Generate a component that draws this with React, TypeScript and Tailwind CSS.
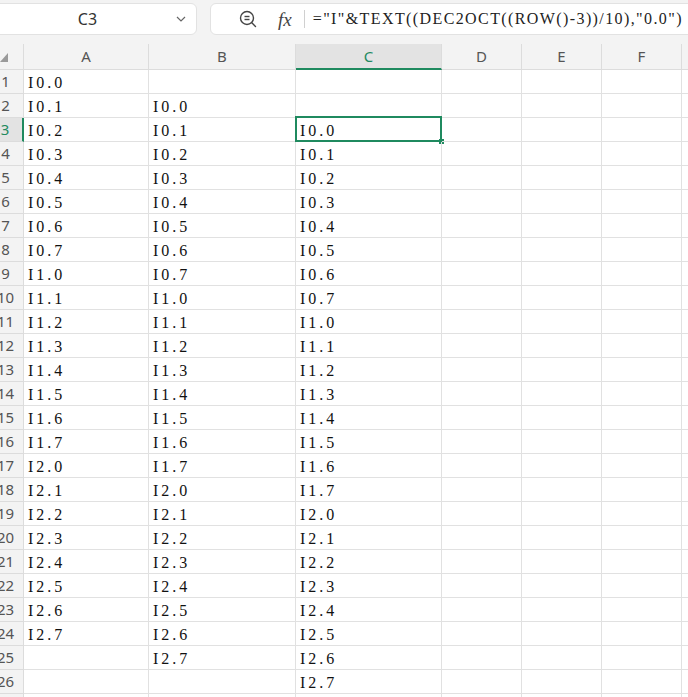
import React from "react";

const COLS = [
  { key: "A", w: 125 },
  { key: "B", w: 147 },
  { key: "C", w: 146 },
  { key: "D", w: 80 },
  { key: "E", w: 80 },
  { key: "F", w: 80 },
  { key: "G", w: 80 },
];

const seq: string[] = [];
for (let i = 0; i < 3; i++) for (let j = 0; j < 8; j++) seq.push(`I${i}.${j}`);

function cellValue(row: number, col: string): string {
  const offset = col === "A" ? 1 : col === "B" ? 2 : col === "C" ? 3 : -1;
  if (offset < 0) return "";
  const idx = row - offset;
  return idx >= 0 && idx < seq.length ? seq[idx] : "";
}

function ZoomIcon() {
  return (
    <svg width="20" height="20" viewBox="0 0 20 20" fill="none" stroke="#444" strokeWidth="1.4">
      <circle cx="9" cy="9" r="6.5" />
      <line x1="13.8" y1="13.8" x2="17.5" y2="17.5" strokeLinecap="round" />
      <line x1="6.5" y1="7.5" x2="11.5" y2="7.5" />
      <line x1="6.5" y1="10.5" x2="11.5" y2="10.5" />
    </svg>
  );
}

function Chevron() {
  return (
    <svg width="14" height="14" viewBox="0 0 14 14" fill="none" stroke="#666" strokeWidth="1.2">
      <polyline points="3,5 7,9 11,5" />
    </svg>
  );
}

export default function App() {
  const rows = Array.from({ length: 28 }, (_, i) => i + 1);
  return (
    <div className="w-[688px] h-[697px] overflow-hidden bg-white">
      {/* toolbar */}
      <div className="h-[44px] bg-[#f3f3f3] flex items-start pt-[3px] gap-[13px] -ml-[10px]">
        <div className="w-[207px] h-[32px] shrink-0 bg-white rounded-[6px] border border-[#e2e2e2] flex items-center pl-[10px] pr-[8px]">
          <div className="flex-1 text-center text-[16px] text-[#333] font-['Noto_Sans',sans-serif] leading-none">C3</div>
          <Chevron />
        </div>
        <div className="w-[500px] h-[32px] shrink-0 bg-white rounded-l-[6px] border border-[#e2e2e2] flex items-center pl-[27px]">
          <ZoomIcon />
          <span className="ml-[20px] text-[19px] italic text-[#444] font-['Liberation_Serif',serif] leading-none">fx</span>
          <div className="ml-[12px] w-px h-[18px] bg-[#d0d0d0]" />
          <span className="ml-[8px] text-[16px] text-[#222] font-['Liberation_Serif',serif] tracking-[1.4px] whitespace-nowrap leading-none">
            ="I"&amp;TEXT((DEC2OCT((ROW()-3))/10),"0.0")
          </span>
        </div>
      </div>

      {/* grid */}
      <div className="-ml-[12px] flex flex-col">
        {/* column header */}
        <div className="flex h-[26px] bg-[#f3f3f3]">
          <div className="w-[36px] shrink-0 relative border-r border-b border-[#dcdcdc]">
            <svg className="absolute left-[12px] top-[9px]" width="8" height="9" viewBox="0 0 8 9">
              <polygon points="8,0 8,9 0,9" fill="#9a9a9a" />
            </svg>
          </div>
          {COLS.map((c) =>
            c.key === "C" ? (
              <div
                key={c.key}
                style={{ width: c.w }}
                className="shrink-0 bg-[#e3e3e3] border-r border-[#dcdcdc] border-b-2 border-b-[#1f8a5f] flex items-center justify-center text-[15px] text-[#1f8a5f] font-['Noto_Sans',sans-serif]"
              >
                {c.key}
              </div>
            ) : (
              <div
                key={c.key}
                style={{ width: c.w }}
                className="shrink-0 border-r border-b border-[#dcdcdc] flex items-center justify-center text-[15px] text-[#555] font-['Noto_Sans',sans-serif]"
              >
                {c.key}
              </div>
            )
          )}
        </div>
        {rows.map((r) => (
          <div key={r} className="flex h-[24px]">
            {r === 3 ? (
              <div className="w-[36px] shrink-0 bg-[#e3e3e3] border-r-2 border-r-[#1f8a5f] border-b border-[#dcdcdc] flex items-center justify-center text-[15px] text-[#1f8a5f] font-['Noto_Sans',sans-serif]">
                {r}
              </div>
            ) : (
              <div className="w-[36px] shrink-0 bg-[#f3f3f3] border-r border-b border-[#dcdcdc] flex items-center justify-center text-[15px] text-[#555] font-['Noto_Sans',sans-serif]">
                {r}
              </div>
            )}
            {COLS.map((c) => {
              const v = cellValue(r, c.key);
              const selected = r === 3 && c.key === "C";
              return (
                <div
                  key={c.key}
                  style={{ width: c.w }}
                  className="shrink-0 relative border-r border-b border-[#e1e1e1] flex items-center pl-[4px] pt-[2px] text-[16px] text-[#111] font-['Liberation_Serif',serif] tracking-[3px] whitespace-nowrap"
                >
                  {v}
                  {selected && (
                    <>
                      <div className="absolute -left-px -top-[2px] -right-px -bottom-px border-2 border-[#1f8a5f]" />
                      <div className="absolute -right-[3px] -bottom-[3px] w-[5px] h-[5px] bg-[#1f8a5f]" />
                    </>
                  )}
                </div>
              );
            })}
          </div>
        ))}
      </div>
    </div>
  );
}
